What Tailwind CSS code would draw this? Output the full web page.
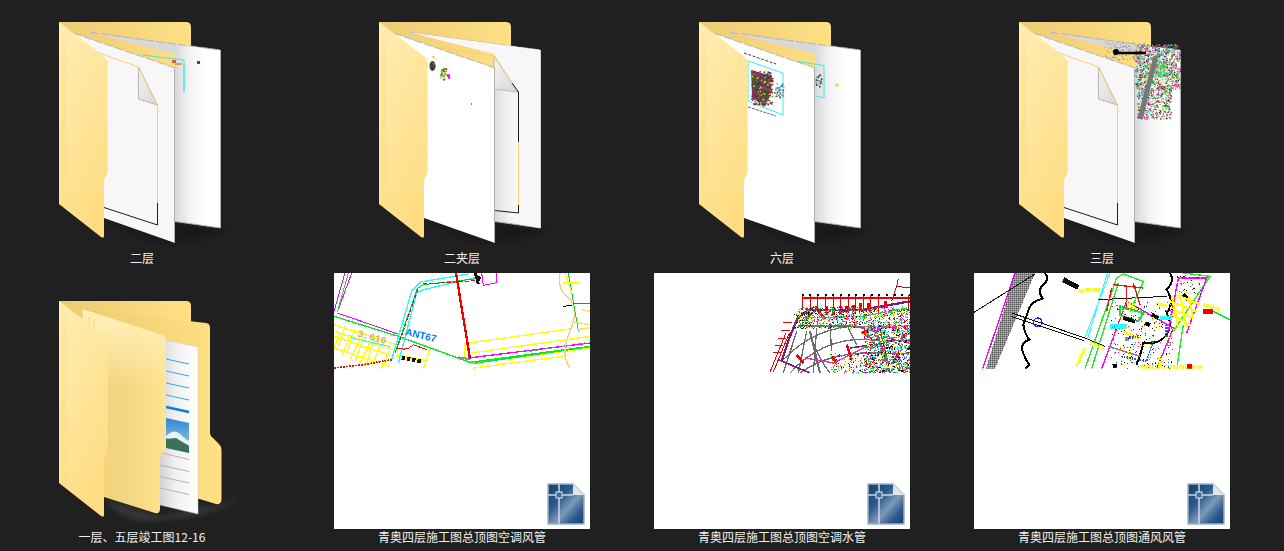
<!DOCTYPE html>
<html lang="en">
<head>
<meta charset="UTF-8">
<title>Folder view</title>
<script src="https://cdn.jsdelivr.net/npm/@tailwindcss/browser@4"></script>
</head>
<body class="bg-[#202020] overflow-hidden h-[551px] font-['Noto_Sans_CJK_SC','Noto_Sans',sans-serif]">

<!-- shared artwork -->
<svg class="absolute w-0 h-0" aria-hidden="true">
  <defs>
    <linearGradient id="tabGrad" x1="0" y1="0" x2="1" y2="0">
      <stop offset="0" stop-color="#eecb72"/><stop offset="1" stop-color="#ffe083"/>
    </linearGradient>
    <linearGradient id="frontGrad" x1="0.1" y1="0" x2="0.5" y2="1">
      <stop offset="0" stop-color="#ffedb0"/><stop offset="0.55" stop-color="#ffe498"/><stop offset="1" stop-color="#fedd82"/>
    </linearGradient>
    <linearGradient id="midFolderGrad" gradientUnits="userSpaceOnUse" x1="90" y1="0" x2="152" y2="0">
      <stop offset="0" stop-color="#f2d47e"/><stop offset="0.5" stop-color="#f5d884"/><stop offset="0.8" stop-color="#fddf8a"/><stop offset="1" stop-color="#fee395"/>
    </linearGradient>
    <linearGradient id="midFolderTop" gradientUnits="userSpaceOnUse" x1="0" y1="50" x2="0" y2="115">
      <stop offset="0" stop-color="#ffeeb4" stop-opacity="1"/><stop offset="1" stop-color="#ffeeb4" stop-opacity="0"/>
    </linearGradient>
    <linearGradient id="sheetShade" gradientUnits="userSpaceOnUse" x1="161" y1="0" x2="190" y2="0">
      <stop offset="0" stop-color="#d8d8d8"/><stop offset="0.5" stop-color="#f3f3f3"/><stop offset="1" stop-color="#ffffff"/>
    </linearGradient>
    <linearGradient id="greySheet" gradientUnits="userSpaceOnUse" x1="161" y1="0" x2="184" y2="0">
      <stop offset="0" stop-color="#dedede"/><stop offset="0.5" stop-color="#f0f0f0"/><stop offset="1" stop-color="#f8f8f8"/>
    </linearGradient>
    <linearGradient id="docShade" gradientUnits="userSpaceOnUse" x1="146" y1="0" x2="184" y2="0">
      <stop offset="0" stop-color="#d4d4d4"/><stop offset="0.4" stop-color="#f0f0f0"/><stop offset="1" stop-color="#ffffff"/>
    </linearGradient>
    <linearGradient id="foldGrad" x1="0" y1="0" x2="1" y2="1">
      <stop offset="0" stop-color="#f4f4f4"/><stop offset="1" stop-color="#d6d6d6"/>
    </linearGradient>
    <linearGradient id="skyGrad" x1="0" y1="0" x2="0" y2="1">
      <stop offset="0" stop-color="#2f86cf"/><stop offset="1" stop-color="#a5d4ee"/>
    </linearGradient>
    <linearGradient id="cadGrad" x1="0" y1="0" x2="1" y2="1">
      <stop offset="0" stop-color="#16406f"/><stop offset="0.35" stop-color="#2a5a8c"/><stop offset="0.58" stop-color="#7d9ab8"/><stop offset="0.78" stop-color="#2f5d8e"/><stop offset="1" stop-color="#173f70"/>
    </linearGradient>
    <filter id="soft" x="-30%" y="-30%" width="160%" height="160%"><feGaussianBlur stdDeviation="2.500"/></filter>
    <pattern id="checker" width="6" height="6" patternUnits="userSpaceOnUse">
      <rect width="6" height="6" fill="#8a8a8a"/><rect width="3" height="3" fill="#5a5a5a"/><rect x="3" y="3" width="3" height="3" fill="#bdbdbd"/>
    </pattern>

    <symbol id="folderBack" viewBox="0 0 256 256">
      <path d="M45 28H172Q177 28 177 33V120H45Z" fill="url(#tabGrad)"/>
    </symbol>
    <symbol id="folderFront" viewBox="0 0 256 256">
      <path d="M45 28L91 63Q93.7 65 93.7 69V176Q93.7 179 92 182L90.5 185Q90 186 90 188V242Q90 245 87 243L45 210Z" fill="url(#frontGrad)"/>
      <path d="M48.500 38V212M51.500 41V214" stroke="#fbd980" stroke-opacity="0.65" stroke-width="1" fill="none"/>
    </symbol>
    <symbol id="backSheet" viewBox="0 0 256 256">
      <path d="M92 226L161 246L161 228L206 236L214 234Q190 248 140 248Z" fill="#111" opacity="0.4" filter="url(#soft)"/>
      <polygon points="76.500,38.500 206.500,56 206.500,234 161,227.500 161,60" fill="url(#sheetShade)"/>
      <path d="M76.500 38.500L206.500 56" stroke="#b4b4b4" stroke-dasharray="9 2" fill="none"/>
      <path d="M76.500 33V44" stroke="#cfcfcf" fill="none"/>
      <path d="M206.500 56V234L161 227.500" stroke="#b0b0b0" fill="none"/>
    </symbol>
    <!-- drawing sheet with the curled corner, sits on the middle sheet -->
    <symbol id="curledDoc" viewBox="0 0 256 256">
      <polygon points="124.500,73 143.500,111 124.500,105" fill="url(#foldGrad)" stroke="#b5b5b5"/>
      <path d="M84 58.500L124.500 73L143.500 111V231" stroke="#f7cf70" fill="none" stroke-width="1"/>
      <path d="M143.500 209V231L90 213.500" stroke="#1c1c1c" fill="none"/>
    </symbol>

    <symbol id="cadIcon" viewBox="0 0 38 42">
      <path d="M1 1H26L37 12V41H1Z" fill="url(#cadGrad)" stroke="#9fb2c7" stroke-width="1.500"/>
      <path d="M26 1V12H37Z" fill="#dfe6ee"/>
      <path d="M12 1V41M1 12H26" stroke="#cdd8e3" stroke-width="1.500" fill="none"/>
      <rect x="9" y="9" width="6" height="6" fill="#3f6d9d" stroke="#dbe5ee"/>
    </symbol>
  </defs>
</svg>

<div class="grid grid-cols-[repeat(4,320px)] gap-y-[7px] ml-[-18px] mt-[-6px]">

  <!-- 二层 -->
  <div class="flex flex-col items-center">
    <svg class="w-64 h-64" viewBox="0 0 256 256">
      <use href="#folderBack"/>
      <use href="#backSheet"/>
      <path d="M128 61L170 66V98" stroke="#35eeee" fill="none"/>
      <path d="M170 70V98" stroke="#35eeee" fill="none"/>
      <rect x="161" y="69" width="7" height="2" fill="#d8a040"/>
      <rect x="158" y="66" width="4" height="3" fill="#e05a30"/>
      <rect x="183" y="67" width="3" height="3" fill="#55502a"/>
      <polygon points="59,39 161,74 161,249 90,224" fill="#f7f7f8"/>
      <path d="M59 39L161 74" stroke="#b4b4b4" stroke-dasharray="9 2" fill="none"/>
      <path d="M160.500 74V249" stroke="#b0b0b0" fill="none"/>
      <use href="#curledDoc"/>
      <use href="#folderFront"/>
    </svg>
    <span class="text-[12px] leading-4 text-[#f0f0f0]">二层</span>
  </div>

  <!-- 二夹层 -->
  <div class="flex flex-col items-center">
    <svg class="w-64 h-64" viewBox="0 0 256 256">
      <use href="#folderBack"/>
      <use href="#backSheet"/>
      <polygon points="76.500,38.500 206.500,56 206.500,234 184,230 184,96 160,60" fill="#f7f7f7"/>
      <polygon points="161,96 184,98 184,219 161,216.500" fill="url(#greySheet)"/>
      <polygon points="160,62 184,98 160,95" fill="url(#foldGrad)" stroke="#b8b8b8"/>
      <path d="M104 53.500L160 62L178 89" stroke="#f7cf70" fill="none"/>
      <path d="M178 89L184.500 98V148M184.500 211V219L161 216.500" stroke="#1c1c1c" fill="none"/>
      <path d="M184.500 148V211" stroke="#f7cf70" fill="none"/>
      <polygon points="59,39 161,74 161,249 90,224" fill="#ffffff"/>
      <path d="M59 39L161 74" stroke="#b4b4b4" stroke-dasharray="9 2" fill="none"/>
      <path d="M160.500 74V249" stroke="#b0b0b0" fill="none"/>
      <ellipse cx="98.500" cy="72" rx="3" ry="5" fill="#45403a"/>
      <g id="speck2"></g>
      <rect x="137" y="109" width="1" height="2" fill="#888"/>
      <use href="#folderFront"/>
    </svg>
    <span class="text-[12px] leading-4 text-[#f0f0f0]">二夹层</span>
  </div>

  <!-- 六层 -->
  <div class="flex flex-col items-center">
    <svg class="w-64 h-64" viewBox="0 0 256 256">
      <use href="#folderBack"/>
      <use href="#backSheet"/>
      <path d="M140 67L170 71.500V104L161 102" stroke="#35eeee" fill="none"/>
      <g id="speck3b"></g>
      <polygon points="59,39 161,74 161,249 90,224" fill="#ffffff"/>
      <path d="M59 39L161 74" stroke="#b4b4b4" stroke-dasharray="9 2" fill="none"/>
      <path d="M160.500 74V249" stroke="#b0b0b0" fill="none"/>
      <path d="M90 59L122 70" stroke="#444" stroke-dasharray="3 1.500" fill="none"/>
      <path d="M94 67L129 79V121L94 107V67" stroke="#35eeee" fill="none"/>
      <path d="M94 113L122 122" stroke="#666" stroke-dasharray="3 1" fill="none"/>
      <path d="M97 76L118 82L117 100L110 113L98 103Z" fill="#55503a"/>
      <g id="speck3"></g>
      <use href="#folderFront"/>
    </svg>
    <span class="text-[12px] leading-4 text-[#f0f0f0]">六层</span>
  </div>

  <!-- 三层 -->
  <div class="flex flex-col items-center">
    <svg class="w-64 h-64" viewBox="0 0 256 256">
      <use href="#folderBack"/>
      <use href="#backSheet"/>
      <g id="speck4"></g>
      <path d="M144 59H172" stroke="#000" stroke-width="2.500"/>
      <circle cx="142" cy="58" r="3" fill="#000"/>
      <path d="M182 62L166 125" stroke="#777" stroke-width="5"/>
      <polygon points="59,39 161,74 161,249 90,224" fill="#f7f7f8"/>
      <path d="M59 39L161 74" stroke="#b4b4b4" stroke-dasharray="9 2" fill="none"/>
      <path d="M160.500 74V249" stroke="#b0b0b0" fill="none"/>
      <use href="#curledDoc"/>
      <use href="#folderFront"/>
    </svg>
    <span class="text-[12px] leading-4 text-[#f0f0f0]">三层</span>
  </div>

  <!-- 一层、五层竣工图12-16 -->
  <div class="flex flex-col items-center">
    <svg class="w-64 h-64" viewBox="0 0 256 256">
      <path d="M92 226L146 243L190 233L208 232L228 224Q200 246 130 248Q100 244 92 226Z" fill="#555" opacity="0.4" filter="url(#soft)"/>
      <use href="#folderBack"/>
      <path d="M69 36L192 50Q196 50.500 196 55V160Q196 163 199 165L205 171Q207.500 173.500 207.500 177V226Q207.500 232 202 231L100 200Z" fill="url(#tabGrad)"/>
      <polygon points="146,66 184,74 184,241 146,232" fill="url(#docShade)" stroke="#c8c8c8" stroke-width="0.500"/>
      <path d="M152 86L175 91M152 98L175 103M152 110L175 115M152 122L175 127" stroke="#2ea6e6" stroke-width="1" fill="none"/>
      <path d="M152 134L175 139" stroke="#0a7fd6" stroke-width="2.500" fill="none"/>
      <polygon points="152,145 175,150 175,180 152,175" fill="url(#skyGrad)"/>
      <path d="M152 163Q160 155 166 161T175 168V172L152 165Z" fill="#e8f3f8"/>
      <polygon points="152,166 162,165 175,173 175,180 152,175" fill="#3a7258"/>
      <path d="M148 180L175 186.500M146 192L175 198.500M146 203.500L175 210M146 215L175 221.500" stroke="#b4b4b4" stroke-width="1" fill="none"/>
      <path id="midFolder" d="M68.700 36L148 62Q152 63.500 152 68V173Q152 176 150 178L147.500 181Q146 183 146 185V236Q146 241 141 240L90 224L68.700 100Z" fill="url(#midFolderGrad)"/>
      <path d="M68.700 36L148 62Q152 63.500 152 68V115H68.700Z" fill="url(#midFolderTop)"/>
      <path d="M75 44V100M80 46V100" stroke="#f7d680" stroke-width="1" fill="none"/>
      <use href="#folderFront"/>
    </svg>
    <span class="text-[12px] leading-4 text-[#f0f0f0]">一层、五层竣工图12-16</span>
  </div>

  <!-- 青奥四层施工图总顶图空调风管 -->
  <div class="flex flex-col items-center">
    <div class="relative w-64 h-64 bg-white">
      <svg class="w-full h-full" viewBox="12 15 768 768" shape-rendering="crispEdges" fill="none" stroke-width="3">
        <path d="M45 15L12 130M65 15L22 132" stroke="#ff00ff"/>
        <path d="M55 15L22 132" stroke="#22dd22"/>
        <g stroke="#ffff00" stroke-width="4">
          <path d="M12 190L205 250M12 240L180 295M12 205L190 265M12 170L200 230M300 240L280 302"/>
          <path d="M30 195L12 240M60 205L35 265M90 215L60 275M120 225L90 285M150 235L125 295M180 245L155 302M45 175L25 235M75 185L50 255M105 195L75 280M135 205L108 290"/>
          <path d="M200 262L290 280" stroke-width="9"/>
          <path d="M415 225L725 182M425 255L780 205M430 285L780 240M430 300L720 262M405 225V270"/>
        </g>
        <path d="M12 145L205 205L420 283L780 235" stroke="#00ee22" stroke-width="4"/>
        <path d="M22 135L210 200" stroke="#ff00ff"/>
        <path d="M415 270L780 225" stroke="#ff00ff" stroke-width="4"/>
        <path d="M600 250L770 224" stroke="#909090" stroke-dasharray="24 24"/>
        <path d="M388 268L420 274" stroke="#909090" stroke-width="6"/>
        <path d="M432 286L780 236" stroke="#00ee22" stroke-width="4"/>
        <path d="M62 200L65 210L180 235" stroke="#22ffff"/>
        <path d="M185 275L245 70L270 42L415 18M205 285L260 75L280 65L440 28" stroke="#22ffff" stroke-width="4"/>
        <path d="M195 255L262 62L280 50L440 32" stroke="#00cc22"/>
        <path d="M200 245L265 60" stroke="#dd1111" stroke-dasharray="9 6"/>
        <path d="M280 48L440 38" stroke="#dd1111" stroke-dasharray="12 6"/>
        <path d="M378 15L420 272" stroke="#ee0000" stroke-width="7"/>
        <path d="M436 15L445 48M450 25L440 45" stroke="#111" stroke-width="9"/>
        <path d="M455 15L460 52L500 44L498 15" stroke="#ff00ff"/>
        <path d="M12 300L100 290L185 275" stroke="#ee1111" stroke-width="5" stroke-dasharray="6 3"/>
        <path d="M205 240Q230 250 250 230L290 245" stroke="#ee1111"/>
        <path d="M215 270L275 280" stroke="#111" stroke-width="12" stroke-dasharray="10 6"/>
        <path d="M690 15Q680 60 715 90T720 190T720 300" stroke="#ffc878" stroke-width="4"/>
        <path d="M715 15L745 188" stroke="#00dd22"/>
        <path d="M700 45H750M705 15L725 75" stroke="#ffff00" stroke-width="5"/>
        <path d="M700 115L725 112" stroke="#111"/>
        <path d="M730 105H780" stroke="#00aa22"/>
        <path d="M755 125L780 130M720 160L780 170M740 185L780 180" stroke="#ffe070" stroke-width="5"/>
        <text x="80" y="205" transform="rotate(15 80 205)" font-family="'Liberation Mono',monospace" font-size="30" font-weight="700" fill="#d4b070" stroke="none">3.610</text>
        <text x="224" y="200" transform="rotate(14 224 200)" font-family="'Liberation Sans',sans-serif" font-size="30" font-weight="700" fill="#0a78ee" stroke="none">ANT67</text>
      </svg>
      <svg class="absolute right-[5px] bottom-[4px] w-[38px] h-[42px]"><use href="#cadIcon"/></svg>
    </div>
    <span class="text-[12px] leading-4 text-[#f0f0f0]">青奥四层施工图总顶图空调风管</span>
  </div>

  <!-- 青奥四层施工图总顶图空调水管 -->
  <div class="flex flex-col items-center">
    <div class="relative w-64 h-64 bg-white">
      <svg class="w-full h-full" viewBox="12 15 768 768" shape-rendering="crispEdges" fill="none" stroke-width="3">
        <defs><clipPath id="clipTwo"><rect x="12" y="15" width="768" height="300"/></clipPath></defs>
        <g clip-path="url(#clipTwo)">
          <g stroke="#6a6a6a" stroke-width="4">
            <path d="M400 275Q500 170 640 175T780 170M420 315Q520 205 660 215T780 205M450 315Q540 250 680 255T780 245"/>
            <path d="M440 190L400 315M470 190L445 315M500 180L490 315M540 175L545 250M590 170L620 230M640 175L680 240M690 180L720 315M480 200Q510 280 540 315"/>
          </g>
          <path d="M395 280L420 205L445 145L480 125H640L780 100" stroke="#7a1a7a" stroke-width="7"/>
          <path d="M445 175H620L680 190L720 315M480 190L510 315" stroke="#6a6a6a" stroke-width="6"/>
          <path d="M385 275L480 315" stroke="#7a1a7a" stroke-width="5"/>
          <path d="M600 240L670 230" stroke="#7a1a7a" stroke-width="5"/>
          <path d="M360 312L408 195M370 312L418 195" stroke="#ee0000"/>
          <path d="M400 162H425M392 187H420M383 210H408M376 232H400M368 254H392" stroke="#ee0000"/>
          <path d="M745 32L740 55L780 60M740 55L725 100" stroke="#ee0000"/>
          <path d="M458 90H780" stroke="#ee0000" stroke-width="6"/>
          <path d="M458 80V125M481 80V125M503 80V130M527 80V130M550 80V135M572 80V135M595 80V135M617 80V135M640 80V135M662 80V135M685 80V135M775 80V135" stroke="#ee0000"/>
          <path d="M455 81H780" stroke="#000" stroke-width="6" stroke-dasharray="6 17"/>
          <path d="M470 120L480 145M495 115L525 155M530 115V140M550 118V140M570 115V140M590 115V135M610 110V130M630 105V130M655 105V125M705 98V120" stroke="#ee0000" stroke-width="9"/>
          <path d="M440 260L460 285M545 265L560 285M590 230L605 275M635 195L670 180M750 250L725 290" stroke="#ee0000" stroke-width="8"/>
          <path d="M465 270L550 285L640 240L680 230" stroke="#ff22aa" stroke-width="4"/>
          <path d="M445 155H630L780 130" stroke="#ffff00" stroke-width="4"/>
          <path d="M460 150L640 145L770 120" stroke="#00ee22" stroke-width="4"/>
          <g id="speckT2"></g>
        </g>
      </svg>
      <svg class="absolute right-[5px] bottom-[4px] w-[38px] h-[42px]"><use href="#cadIcon"/></svg>
    </div>
    <span class="text-[12px] leading-4 text-[#f0f0f0]">青奥四层施工图总顶图空调水管</span>
  </div>

  <!-- 青奥四层施工图总顶图通风风管 -->
  <div class="flex flex-col items-center">
    <div class="relative w-64 h-64 bg-white">
      <svg class="w-full h-full" viewBox="12 15 768 768" shape-rendering="crispEdges" fill="none" stroke-width="3">
        <defs><clipPath id="clipThree"><rect x="12" y="15" width="768" height="287"/></clipPath></defs>
        <g clip-path="url(#clipThree)">
          <polygon points="48,302 135,15 195,15 75,302" fill="url(#checker)"/>
          <path d="M38 302L135 15" stroke="#ff00ff" stroke-width="4"/>
          <path d="M12 133L195 18" stroke="#111"/>
          <path d="M225 15Q240 35 220 50T218 92Q185 100 178 120T160 170Q165 200 178 215Q150 225 158 250T178 290L165 302" stroke="#000" stroke-width="6"/>
          <path d="M125 135L345 210L405 235M122 145L342 218" stroke="#111"/>
          <circle cx="203" cy="163" r="13" stroke="#1122ee" stroke-width="4"/>
          <path d="M280 35L325 58" stroke="#111" stroke-width="15"/>
          <path d="M328 68L390 66" stroke="#ffff00" stroke-width="12" stroke-dasharray="6 2"/>
          <path d="M345 208L420 15M352 215L412 15" stroke="#22ffff"/>
          <path d="M385 95L590 85" stroke="#111"/>
          <path d="M600 15Q615 40 590 65Q615 105 590 135Q610 170 590 200T520 225Q515 250 500 290" stroke="#000" stroke-width="6"/>
          <path d="M345 302L440 30L460 18L520 40L480 130M365 302L445 45M610 190L720 25L640 15M640 170L620 302" stroke="#22ee22" stroke-width="4"/>
          <path d="M395 302L470 100L610 180L560 302" stroke="#ff00ff" stroke-width="4"/>
          <path d="M595 190L625 30L710 30L650 195" stroke="#ff00ff" stroke-width="4"/>
          <path d="M410 130L425 60M430 50L520 60M470 50V120M490 45L510 110" stroke="#ee1111" stroke-width="4"/>
          <path d="M450 142L505 160L520 135L450 115Z" stroke="#00ee22" stroke-width="6"/>
          <path d="M460 150L495 160M525 165L540 172M545 140L565 150M640 80L655 95M430 295H440" stroke="#000" stroke-width="12"/>
          <path d="M420 175H470M570 150H605" stroke="#22ffff" stroke-width="14"/>
          <path d="M600 100L680 130M600 120L670 150M605 140L660 170M620 80L690 110M605 85L625 180M630 80L650 180M655 85L670 150" stroke="#ffff00" stroke-width="6"/>
          <path d="M360 225L400 240M320 295L345 240M470 100L500 120M560 105L590 115M700 110L750 125M570 270V295M510 297H700M460 190L510 215M470 270H490" stroke="#ffff00" stroke-width="10" stroke-dasharray="6 3"/>
          <path d="M470 210L510 205M590 170V210" stroke="#1166ee" stroke-width="8" stroke-dasharray="5 3"/>
          <path d="M550 220L530 280L450 265" stroke="#1166ee" stroke-width="5" stroke-dasharray="5 3"/>
          <path d="M700 130L730 130M650 295H665" stroke="#ee0000" stroke-width="14"/>
          <path d="M730 130L780 155" stroke="#00dd22" stroke-width="4"/>
          <rect x="593" y="224" width="9" height="9" stroke="#888"/>
          <rect x="465" y="208" width="9" height="9" fill="#888" stroke="#888"/>
          <path d="M415 235L510 265" stroke="#888" stroke-width="5"/>
          <g id="speckT3"></g>
        </g>
      </svg>
      <svg class="absolute right-[5px] bottom-[4px] w-[38px] h-[42px]"><use href="#cadIcon"/></svg>
    </div>
    <span class="text-[12px] leading-4 text-[#f0f0f0]">青奥四层施工图总顶图通风风管</span>
  </div>
</div>

<script>
    // scatter pixels for the dense parts of the CAD drawings (seeded so every run is the same)
    let seed = 42;
    const rnd = () => {
        seed = (seed * 1664525 + 1013904223) % 4294967296;
        return seed / 4294967296;
    };
    const speckle = (id, x, y, w, h, count, colors, size) => {
        const group = document.getElementById(id);
        let out = '';
        for (let i = 0; i < count; i++) {
            const c = colors[Math.floor(rnd() * colors.length)];
            const px = (x + rnd() * w).toFixed(1);
            const py = (y + rnd() * h).toFixed(1);
            out += `<rect x="${px}" y="${py}" width="${size}" height="${size}" fill="${c}"/>`;
        }
        group.insertAdjacentHTML('beforeend', out);
    };

    const mix = ['#ff00ff', '#ee0000', '#ffff00', '#00ee22', '#777777', '#777777', '#777777', '#111111', '#22ffff'];

    // 二夹层
    speckle('speck2', 97, 68, 3, 7, 16, ['#333', '#444', '#555', '#7a6a40'], 1.5);
    speckle('speck2', 98, 62, 2, 2, 4, ['#ffee00', '#aa1111'], 1);
    speckle('speck2', 106, 74, 6, 11, 40, ['#22ffff', '#333', '#aa8800', '#2a7a2a', '#ffff00'], 1.5);
    speckle('speck2', 112, 79, 3, 5, 12, ['#ff00ff'], 1.5);

    // 六层
    speckle('speck3', 97, 76, 21, 34, 220, ['#444', '#5a5230', '#333', '#777', '#ffee00', '#aa1111', '#2244aa', '#ff00cc'], 1.5);
    speckle('speck3', 120, 89, 9, 15, 40, ['#6ab0e0', '#6ab0e0', '#777', '#444'], 1.5);
    speckle('speck3b', 161, 80, 6, 12, 24, ['#6ab0e0', '#777', '#333'], 1.5);
    speckle('speck3b', 180, 89, 6, 3, 10, ['#ffee00', '#66aa22'], 1);

    // 三层
    speckle('speck4', 131, 48, 40, 18, 160, ['#999', '#bbb', '#777'], 1);
    speckle('speck4', 161, 50, 45, 45, 1000, mix, 1.2);
    speckle('speck4', 163, 95, 34, 30, 380, mix, 1.2);
    speckle('speck4', 175, 62, 18, 22, 140, ['#22dd44', '#22dd44', '#dddddd'], 1.5);

    // thumbnails, in the 3x units of their viewBox
    speckle('speckT2', 445, 115, 335, 65, 1100, mix, 3);
    speckle('speckT2', 640, 170, 140, 145, 1000, mix, 4);
    speckle('speckT2', 540, 255, 140, 60, 240, mix, 3);
    speckle('speckT2', 430, 130, 60, 50, 120, ['#777777', '#00aa22', '#ffff00', '#111111'], 3);
    speckle('speckT3', 420, 100, 190, 200, 320, ['#ffff00', '#ffff00', '#ee0000', '#1166ee', '#111111', '#ff00ff'], 3);
    speckle('speckT3', 620, 20, 70, 60, 70, ['#ffff00', '#ffb060', '#1166ee', '#111111'], 3);
</script>
</body>
</html>
